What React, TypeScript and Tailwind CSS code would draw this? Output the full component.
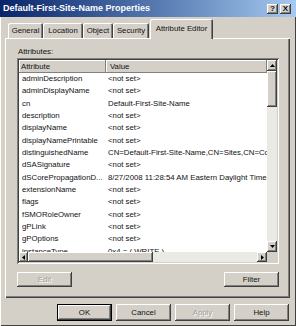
import clsx from 'clsx'

const ROWS: [string, string][] = [
  ['adminDescription', '<not set>'],
  ['adminDisplayName', '<not set>'],
  ['cn', 'Default-First-Site-Name'],
  ['description', '<not set>'],
  ['displayName', '<not set>'],
  ['displayNamePrintable', '<not set>'],
  ['distinguishedName', 'CN=Default-First-Site-Name,CN=Sites,CN=Configuration,DC=contoso,DC=com'],
  ['dSASignature', '<not set>'],
  ['dSCorePropagationD...', '8/27/2008 11:28:54 AM Eastern Daylight Time'],
  ['extensionName', '<not set>'],
  ['flags', '<not set>'],
  ['fSMORoleOwner', '<not set>'],
  ['gPLink', '<not set>'],
  ['gPOptions', '<not set>'],
  ['instanceType', '0x4 = ( WRITE )'],
]

const RAISED = 'bg-[#d4d0c8] shadow-[inset_-1px_-1px_0_#404040,inset_1px_1px_0_#ffffff,inset_-2px_-2px_0_#808080]'

export default function App() {
  return (
    <div className="w-[296px] h-[326px] bg-[#d4d0c8] flex flex-col overflow-hidden font-['Liberation_Sans',Arial,sans-serif] text-[7.8px] text-[#111] shadow-[inset_1px_0_0_#ffffff,inset_-1px_-1px_0_#404040]">
      {/* Title bar */}
      <div className="h-[17px] flex items-center pl-[3px] pr-[5px] bg-linear-to-r from-[#0a246a] to-[#a6caf0]">
        <span className="flex-1 text-[9px] font-bold text-white whitespace-nowrap">Default-First-Site-Name Properties</span>
        <div className="flex gap-[2px]">
          <div className={clsx(RAISED, 'w-[11px] h-[10px] flex items-center justify-center text-[8px] font-bold leading-none')}>?</div>
          <div className={clsx(RAISED, 'w-[11px] h-[10px] flex items-center justify-center text-[8px] font-bold leading-none')}>X</div>
        </div>
      </div>

      {/* Tabs */}
      <div className="flex items-end h-[19px] mt-[2px] pl-[8px]">
        <Tab label="General" w="w-[35px]" />
        <Tab label="Location" w="w-[40px]" />
        <Tab label="Object" w="w-[30px]" />
        <Tab label="Security" w="w-[36px]" />
        <div className="relative z-10 ml-[1px] mb-[-1px] w-[63px] h-[20px] bg-[#d4d0c8] rounded-t-[2px] flex items-center justify-center whitespace-nowrap shadow-[inset_1px_1px_0_#ffffff,inset_-1px_0_0_#404040,inset_-2px_0_0_#808080]">
          Attribute Editor
        </div>
      </div>

      {/* Panel */}
      <div className="ml-[5px] w-[285px] h-[260px] flex flex-col pl-[12px] pt-[9px] shadow-[inset_1px_1px_0_#ffffff,inset_-1px_-1px_0_#404040,inset_-2px_-2px_0_#808080]">
        <p className="leading-[10px] ml-[1px]">Attributes:</p>

        {/* List view */}
        <div className="mt-[1px] w-[262px] h-[206px] p-[2px] flex bg-[#d4d0c8] shadow-[inset_1px_1px_0_#808080,inset_-1px_-1px_0_#ffffff,inset_2px_2px_0_#404040,inset_-2px_-2px_0_#d4d0c8]">
          <div className="w-[248px] flex flex-col">
            <div className="h-[13px] flex leading-[13px]">
              <div className="w-[87px] pl-[2px] shadow-[inset_-1px_-1px_0_#808080,inset_1px_1px_0_#ffffff]">Attribute</div>
              <div className="flex-1 pl-[4px] shadow-[inset_-1px_-1px_0_#808080,inset_1px_1px_0_#ffffff]">Value</div>
            </div>
            <div className="h-[179px] bg-white overflow-hidden">
              {ROWS.map(([name, value]) => (
                <div key={name} className="h-[12.35px] leading-[12.35px] flex">
                  <div className="w-[87px] pl-[3px] whitespace-nowrap overflow-hidden">{name}</div>
                  <div className="flex-1 pl-[2px] whitespace-nowrap overflow-hidden">{value}</div>
                </div>
              ))}
            </div>
            {/* horizontal scroll */}
            <div className="h-[10px] flex">
              <div className={clsx(RAISED, 'w-[9px] flex items-center justify-center')}><Arrow dir="left" /></div>
              <div className={clsx(RAISED, 'w-[125px]')} />
              <div className="flex-1 bg-[#ebe9e4]" />
              <div className={clsx(RAISED, 'w-[10px] flex items-center justify-center')}><Arrow dir="right" /></div>
            </div>
          </div>
          {/* vertical scroll */}
          <div className="w-[10px] flex flex-col">
            <div className={clsx(RAISED, 'h-[11px] flex items-center justify-center')}><Arrow dir="up" /></div>
            <div className={clsx(RAISED, 'h-[36px]')} />
            <div className="flex-1 bg-[#ebe9e4]" />
            <div className={clsx(RAISED, 'h-[11px] flex items-center justify-center')}><Arrow dir="down" /></div>
            <div className="h-[10px] bg-[#d4d0c8]" />
          </div>
        </div>

        <div className="mt-[8px] w-[262px] flex justify-between">
          <Button label="Edit" disabled />
          <Button label="Filter" />
        </div>
      </div>

      {/* Dialog buttons */}
      <div className="mt-[6px] flex pl-[57px] gap-[4px]">
        <div className="w-[55px] h-[17px] border border-black">
          <div className={clsx(RAISED, 'h-full flex items-center justify-center')}>OK</div>
        </div>
        <Button label="Cancel" tall />
        <Button label="Apply" tall disabled />
        <Button label="Help" tall />
      </div>
    </div>
  )
}

function Tab({ label, w }: { label: string; w: string }) {
  return (
    <div className={clsx(w, 'h-[15px] rounded-t-[2px] flex items-center justify-center whitespace-nowrap shadow-[inset_1px_1px_0_#ffffff,inset_-1px_0_0_#404040,inset_-2px_0_0_#808080]')}>
      {label}
    </div>
  )
}

function Button({ label, disabled, tall }: { label: string; disabled?: boolean; tall?: boolean }) {
  return (
    <div className={clsx(RAISED, 'w-[55px] flex items-center justify-center', tall ? 'h-[17px]' : 'h-[15px]',
      disabled && 'text-[#a0a0a0] [text-shadow:1px_1px_0_#ffffff]')}>
      {label}
    </div>
  )
}

function Arrow({ dir }: { dir: 'up' | 'down' | 'left' | 'right' }) {
  const vertical = dir === 'up' || dir === 'down'
  const pts = {
    up: '0,3 2.5,0 5,3',
    down: '0,0 2.5,3 5,0',
    left: '3,0 0,2.5 3,5',
    right: '0,0 3,2.5 0,5',
  }[dir]
  return (
    <svg width={vertical ? 5 : 3} height={vertical ? 3 : 5} viewBox={vertical ? '0 0 5 3' : '0 0 3 5'}>
      <polygon points={pts} fill="#000" />
    </svg>
  )
}
